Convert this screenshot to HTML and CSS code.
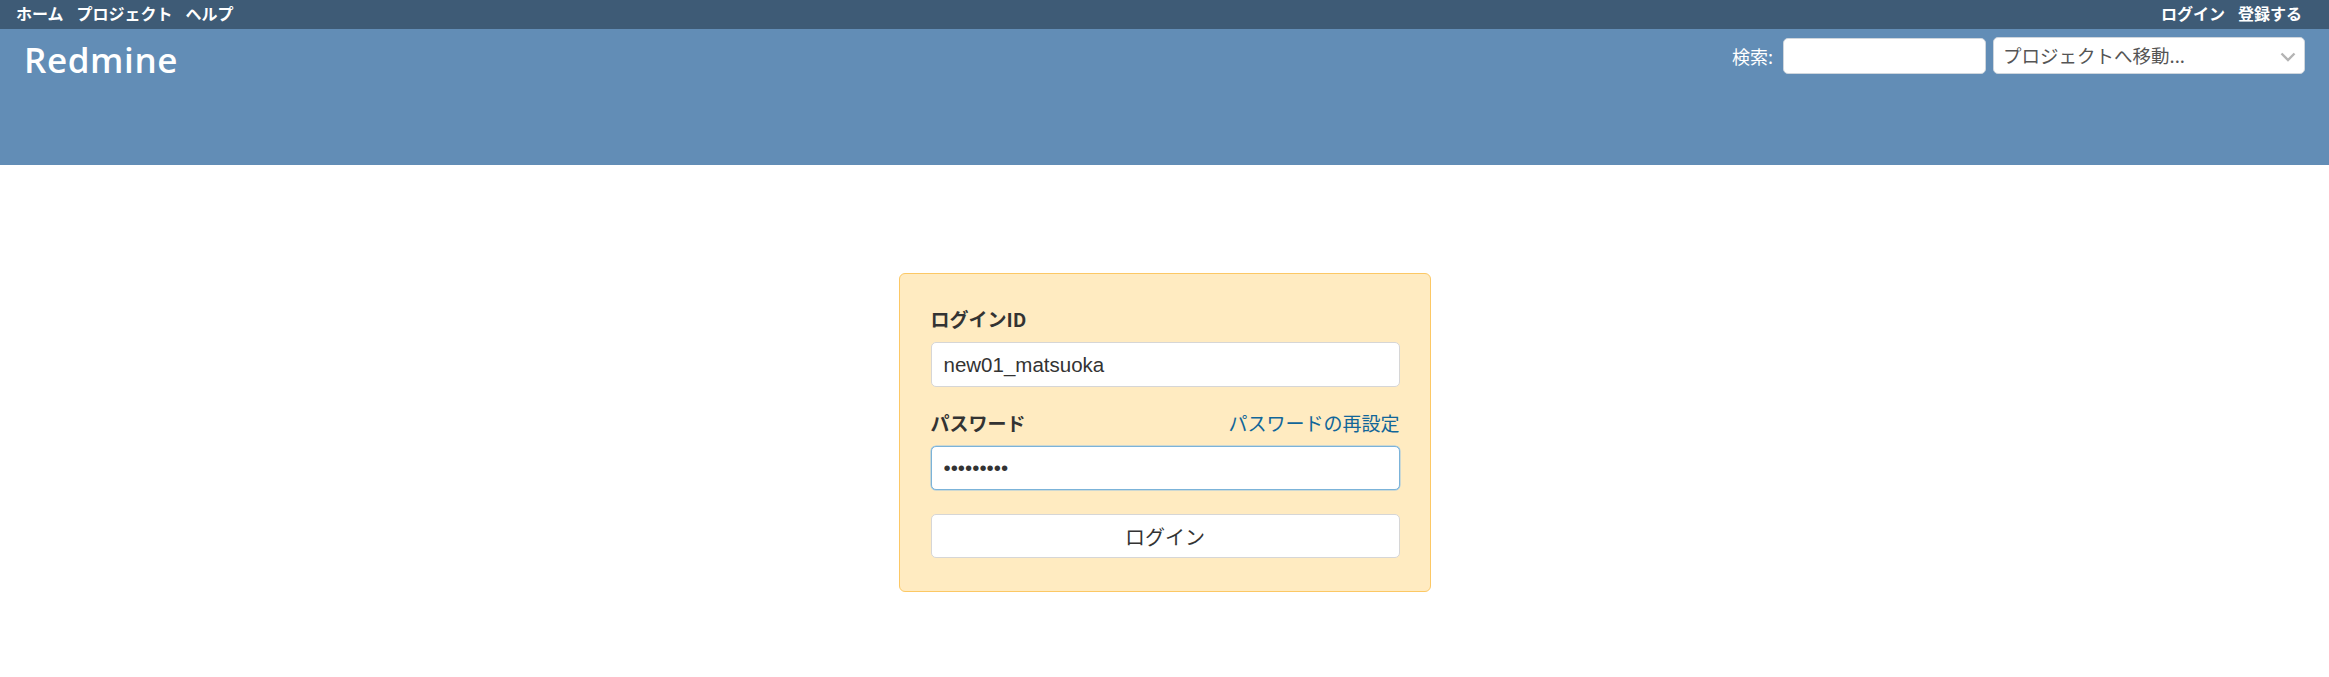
FILE: index.html
```html
<!DOCTYPE html>
<html lang="ja">
<head>
<meta charset="utf-8">
<title>Redmine</title>
<link rel="stylesheet" href="styles.css">
</head>
<body>
<div class="top-menu">
  <ul class="menu">
    <li><a class="menu-link" href="#">ホーム</a></li>
    <li><a class="menu-link" href="#">プロジェクト</a></li>
    <li><a class="menu-link" href="#">ヘルプ</a></li>
  </ul>
  <ul class="menu">
    <li><a class="menu-link" href="#">ログイン</a></li>
    <li><a class="menu-link" href="#">登録する</a></li>
  </ul>
</div>
<header class="header">
  <h1 class="site-title">Redmine</h1>
  <div class="quick-search">
    <label class="search-label" for="q">検索:</label>
    <input class="search-input" id="q" type="text">
    <div class="jump-box">
      <span class="jump-text">プロジェクトへ移動...</span>
      <svg class="chevron" width="16" height="10" viewBox="0 0 16 10"><path d="M1.5 1.5 L8 8 L14.5 1.5" fill="none" stroke="#b4b4b4" stroke-width="2.4"/></svg>
    </div>
  </div>
</header>
<main class="content">
  <form class="login-form">
    <label class="field-label" for="username">ログインID</label>
    <input class="text-input" id="username" type="text" value="new01_matsuoka">
    <div class="password-row">
      <label class="field-label" for="password">パスワード</label>
      <a class="lost-password" href="#">パスワードの再設定</a>
    </div>
    <input class="text-input is-focused" id="password" type="password" value="123456789">
    <button class="login-button" type="button">ログイン</button>
  </form>
</main>
</body>
</html>
```

FILE: styles.css
```css
* {
  box-sizing: border-box;
}

html, body {
  margin: 0;
  padding: 0;
  background: #ffffff;
}

body {
  font-family: "Open Sans", "Noto Sans CJK JP", sans-serif;
  color: #333333;
}

.top-menu {
  height: 29px;
  background: #3e5b76;
  display: flex;
  justify-content: space-between;
  align-items: center;
  padding: 0 14px 0 16px;
}

.menu {
  list-style: none;
  margin: 0;
  padding: 0;
  display: flex;
}

.menu-link {
  display: block;
  margin-right: 13px;
  color: #ffffff;
  text-decoration: none;
  font-family: "Noto Sans CJK JP", sans-serif;
  font-weight: 700;
  font-size: 16px;
  line-height: 27px;
  padding-bottom: 2px;
}

.header {
  height: 136px;
  background: #628db6;
  display: flex;
  justify-content: space-between;
  align-items: flex-start;
  padding: 8px 24px 0 24px;
}

.site-title {
  margin: 2px 0 0 0;
  color: #ffffff;
  font-family: "Open Sans", sans-serif;
  font-weight: 600;
  font-size: 35px;
  line-height: 42px;
  letter-spacing: 0.6px;
}

.quick-search {
  display: flex;
  align-items: center;
}

.search-label {
  color: #ffffff;
  font-family: "Noto Sans CJK JP", sans-serif;
  font-size: 18px;
  line-height: 36px;
  margin-right: 10px;
}

.search-input {
  width: 203px;
  height: 36px;
  border: 1px solid #cfd6dd;
  border-radius: 5px;
  background: #ffffff;
  margin: 0 7px 0 0;
  padding: 0 8px;
  font-size: 18px;
}

.jump-box {
  width: 312px;
  height: 37px;
  background: #ffffff;
  border: 1px solid #cfd6dd;
  border-radius: 5px;
  display: flex;
  align-items: center;
  justify-content: space-between;
  padding: 0 8px 0 9px;
}

.jump-text {
  font-family: "Noto Sans CJK JP", sans-serif;
  font-size: 18.5px;
  color: #555555;
  line-height: 35px;
}

.chevron {
  display: block;
  margin-top: 2px;
}

.content {
  padding-top: 108px;
}

.login-form {
  width: 532px;
  margin: 0 auto;
  background: #ffebc1;
  border: 1px solid #fcc865;
  border-radius: 6px;
  padding: 30px 30px 33px 31px;
  display: flex;
  flex-direction: column;
}

.field-label {
  display: block;
  font-family: "Noto Sans CJK JP", sans-serif;
  font-weight: 700;
  font-size: 19px;
  line-height: 30px;
  color: #333333;
  margin-bottom: 8px;
}

.password-row {
  display: flex;
  justify-content: space-between;
  align-items: flex-start;
  margin-top: 21px;
}

.lost-password {
  font-family: "Noto Sans CJK JP", sans-serif;
  font-size: 19px;
  line-height: 30px;
  color: #116699;
  text-decoration: none;
}

.text-input {
  display: block;
  width: 100%;
  height: 45px;
  margin: 0;
  border: 1px solid #d6d6d6;
  border-radius: 5px;
  background: #ffffff;
  padding: 0 12px;
  font-family: "Liberation Sans", Arial, sans-serif;
  font-size: 20.5px;
  color: #333333;
  outline: none;
}

.text-input.is-focused {
  height: 44px;
  border-color: #7bb3d9;
  box-shadow: 0 0 0 0.5px #9cc6e4;
}

.login-button {
  display: block;
  width: 100%;
  height: 44px;
  margin-top: 24px;
  background: #ffffff;
  border: 1px solid #d6d6d6;
  border-radius: 5px;
  font-family: "Noto Sans CJK JP", sans-serif;
  font-size: 20px;
  color: #333333;
  padding: 0;
}
```
